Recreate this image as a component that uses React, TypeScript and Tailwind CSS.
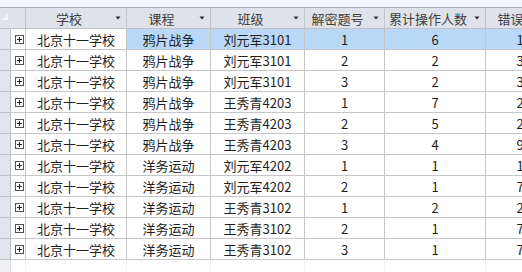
import React from 'react';

interface Row {
  school: string;
  course: string;
  cls: string;
  puzzle: string;
  ops: string;
  errors: string;
}

const rows: Row[] = [
  { school: '北京十一学校', course: '鸦片战争', cls: '刘元军3101', puzzle: '1', ops: '6', errors: '10' },
  { school: '北京十一学校', course: '鸦片战争', cls: '刘元军3101', puzzle: '2', ops: '2', errors: '33' },
  { school: '北京十一学校', course: '鸦片战争', cls: '刘元军3101', puzzle: '3', ops: '2', errors: '33' },
  { school: '北京十一学校', course: '鸦片战争', cls: '王秀青4203', puzzle: '1', ops: '7', errors: '24' },
  { school: '北京十一学校', course: '鸦片战争', cls: '王秀青4203', puzzle: '2', ops: '5', errors: '23' },
  { school: '北京十一学校', course: '鸦片战争', cls: '王秀青4203', puzzle: '3', ops: '4', errors: '93' },
  { school: '北京十一学校', course: '洋务运动', cls: '刘元军4202', puzzle: '1', ops: '1', errors: '13' },
  { school: '北京十一学校', course: '洋务运动', cls: '刘元军4202', puzzle: '2', ops: '1', errors: '73' },
  { school: '北京十一学校', course: '洋务运动', cls: '王秀青3102', puzzle: '1', ops: '2', errors: '20' },
  { school: '北京十一学校', course: '洋务运动', cls: '王秀青3102', puzzle: '2', ops: '1', errors: '73' },
  { school: '北京十一学校', course: '洋务运动', cls: '王秀青3102', puzzle: '3', ops: '1', errors: '73' },
];

const columns = [
  { label: '学校', width: 'w-[101px]' },
  { label: '课程', width: 'w-[84px]' },
  { label: '班级', width: 'w-[94px]' },
  { label: '解密题号', width: 'w-[80px]' },
  { label: '累计操作人数', width: 'w-[101px]' },
  { label: '错误次数', width: 'w-[90px]' },
];

function SortArrow() {
  return (
    <svg width="12" height="6" viewBox="0 0 12 6" className="shrink-0">
      <path d="M3.5 1.5h5l-2.5 3z" fill="#2f2f2f" />
    </svg>
  );
}

function ExpandBox() {
  return (
    <div className="w-[9px] h-[9px] border border-[#505050] bg-white flex items-center justify-center relative">
      <div className="absolute w-[5px] h-px bg-[#202020]" />
      <div className="absolute w-px h-[5px] bg-[#202020]" />
    </div>
  );
}

function Cell({
  width,
  selected,
  align = 'center',
  children,
}: {
  width: string;
  selected?: boolean;
  align?: 'center' | 'right';
  children: React.ReactNode;
}) {
  return (
    <div
      className={`${width} shrink-0 h-[21px] border-r border-b border-[#c6c6c6] flex items-center ${
        align === 'right' ? 'justify-end pr-[44px]' : 'justify-center'
      } ${selected ? 'bg-[#b9d8f8]' : 'bg-white'}`}
    >
      {children}
    </div>
  );
}

export default function App() {
  return (
    <div className="w-[522px] h-[272px] overflow-hidden bg-[#f3f7fb] pt-[7px] font-['Noto_Sans_CJK_SC','Microsoft_YaHei',sans-serif] text-[13px] leading-none text-[#1e1e1e]">
      <div className="w-[600px]">
        {/* header */}
        <div className="flex h-[22px] border-t border-b border-t-[#a9adb4] border-b-[#bfc2c8] bg-[#dfe2e9]">
          <div className="w-[26px] shrink-0 border-r border-[#c2c5cb] relative">
            <svg width="6" height="7" viewBox="0 0 6 7" className="absolute left-[2px] top-[5px]">
              <path d="M6 0v7H0z" fill="#f2f4f7" />
            </svg>
          </div>
          {columns.map((col) => (
            <div
              key={col.label}
              className={`${col.width} shrink-0 border-r border-[#c2c5cb] flex items-center pr-[2px] text-[#3e3e3e]`}
            >
              <span className="flex-1 text-center">{col.label}</span>
              <SortArrow />
            </div>
          ))}
        </div>

        {/* records */}
        {rows.map((r, i) => {
          const sel = i === 0;
          return (
            <div key={i} className="flex">
              <div className="w-[11px] shrink-0 h-[21px] bg-[#e2e5eb] border-r border-b border-[#bdc0c6]" />
              <div className="w-[15px] shrink-0 h-[21px] bg-white border-r border-b border-[#c6c6c6] flex items-center pl-[4px]">
                <ExpandBox />
              </div>
              <Cell width="w-[101px]">{r.school}</Cell>
              <Cell width="w-[84px]" selected={sel}>{r.course}</Cell>
              <Cell width="w-[94px]" selected={sel}>{r.cls}</Cell>
              <Cell width="w-[80px]" selected={sel}>{r.puzzle}</Cell>
              <Cell width="w-[101px]" selected={sel}>{r.ops}</Cell>
              <Cell width="w-[90px]" selected={sel} align="right">{r.errors}</Cell>
            </div>
          );
        })}

        {/* empty area below the last record */}
        <div className="flex h-[20px]">
          <div className="w-[11px] shrink-0 bg-[#eef0f4] border-r border-[#dcdfe4]" />
          <div className="w-[15px] shrink-0 bg-white border-r border-[#f0f0f0]" />
          {columns.map((col) => (
            <div key={col.label} className={`${col.width} shrink-0 bg-white border-r border-[#f0f0f0]`} />
          ))}
        </div>
      </div>
    </div>
  );
}
